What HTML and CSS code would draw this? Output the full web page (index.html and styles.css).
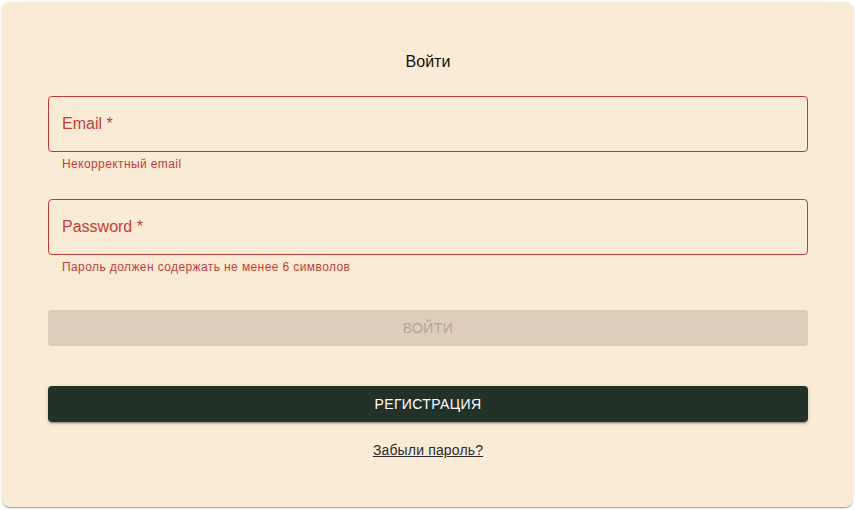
FILE: index.html
```html
<!DOCTYPE html>
<html lang="ru">
<head>
<meta charset="utf-8">
<title>Войти</title>
<link rel="stylesheet" href="styles.css">
</head>
<body>
<div class="card">
  <h1 class="title">Войти</h1>
  <div class="field">
    <div class="input"><span class="label">Email *</span></div>
    <div class="helper">Некорректный email</div>
  </div>
  <div class="field field-second">
    <div class="input"><span class="label">Password *</span></div>
    <div class="helper">Пароль должен содержать не менее 6 символов</div>
  </div>
  <button class="btn btn-disabled" disabled>Войти</button>
  <button class="btn btn-dark">Регистрация</button>
  <div class="links"><a class="forgot" href="#">Забыли пароль?</a></div>
</div>
</body>
</html>
```

FILE: styles.css
```css
* { box-sizing: border-box; }
html, body { margin: 0; padding: 0; background: #ffffff; }
body {
  font-family: "Liberation Sans", Arial, sans-serif;
  padding: 2px 2px 3px 2px;
}
.card {
  width: 851px;
  height: 505px;
  background: #faebd7;
  border-radius: 8px;
  box-shadow: 0 2px 1px -1px rgba(0,0,0,0.2), 0 1px 1px 0 rgba(0,0,0,0.14), 0 1px 3px 0 rgba(0,0,0,0.12);
  padding: 48px 45px 0 46px;
  display: flex;
  flex-direction: column;
}
.title {
  margin: 0;
  font-size: 16px;
  font-weight: 400;
  line-height: 24px;
  text-align: center;
  color: #111;
}
.field { margin-top: 22px; }
.field-second { margin-top: 25px; }
.input {
  height: 56px;
  border: 1px solid #c43a36;
  border-radius: 4px;
  display: flex;
  align-items: center;
  padding: 0 13px;
}
.label {
  font-size: 16px;
  color: #c23c38;
  line-height: 20px;
}
.helper {
  margin: 2px 14px 0;
  font-size: 12px;
  line-height: 20px;
  color: #c23c38;
  letter-spacing: 0.4px;
}
.btn {
  height: 36px;
  width: 100%;
  border: 0;
  border-radius: 4px;
  font-family: "Liberation Sans", Arial, sans-serif;
  font-size: 14px;
  text-transform: uppercase;
  letter-spacing: 0.4px;
  padding: 0;
}
.btn-disabled {
  margin-top: 33px;
  background: #decdba;
  color: #b2a69a;
}
.btn-dark {
  margin-top: 40px;
  background: #233229;
  color: #ffffff;
  box-shadow: 0 3px 1px -2px rgba(0,0,0,0.2), 0 2px 2px 0 rgba(0,0,0,0.14), 0 1px 5px 0 rgba(0,0,0,0.12);
}
.links {
  margin-top: 18px;
  text-align: center;
  line-height: 20px;
}
.forgot {
  font-size: 14px;
  color: #2b2b2b;
  text-decoration: underline;
  letter-spacing: 0.15px;
}
```
